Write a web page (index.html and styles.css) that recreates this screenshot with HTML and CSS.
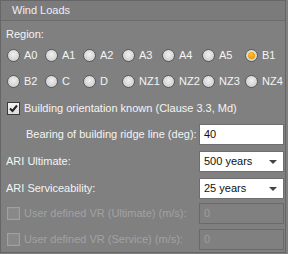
FILE: index.html
```html
<!DOCTYPE html>
<html>
<head>
<meta charset="utf-8">
<link rel="stylesheet" href="styles.css">
</head>
<body>
<div class="panel">
  <div class="header">Wind Loads</div>
  <div class="body">
    <div class="row-region">Region:</div>
    <div class="radios">
      <label class="radio"><span class="dot"></span>A0</label>
      <label class="radio"><span class="dot"></span>A1</label>
      <label class="radio"><span class="dot"></span>A2</label>
      <label class="radio"><span class="dot"></span>A3</label>
      <label class="radio"><span class="dot"></span>A4</label>
      <label class="radio"><span class="dot"></span>A5</label>
      <label class="radio"><span class="dot on"></span>B1</label>
      <label class="radio"><span class="dot"></span>B2</label>
      <label class="radio"><span class="dot"></span>C</label>
      <label class="radio"><span class="dot"></span>D</label>
      <label class="radio"><span class="dot"></span>NZ1</label>
      <label class="radio"><span class="dot"></span>NZ2</label>
      <label class="radio"><span class="dot"></span>NZ3</label>
      <label class="radio"><span class="dot"></span>NZ4</label>
    </div>
    <label class="check-row"><span class="cb"><svg width="9" height="9" viewBox="0 0 9 9"><path d="M1 4.5 L3.5 7 L8 1.5" fill="none" stroke="#222" stroke-width="2"/></svg></span>Building orientation known (Clause 3.3, Md)</label>
    <div class="field r-bearing"><span class="lbl indent">Bearing of building ridge line (deg):</span><div class="input">40</div></div>
    <div class="field r-ariu"><span class="lbl">ARI Ultimate:</span><div class="input select">500 years<span class="arrow"></span></div></div>
    <div class="field r-aris"><span class="lbl">ARI Serviceability:</span><div class="input select">25 years<span class="arrow"></span></div></div>
    <div class="field r-vru disabled"><span class="lbl"><span class="cb off"></span>User defined VR (Ultimate) (m/s):</span><div class="input dis">0</div></div>
    <div class="field r-vrs disabled"><span class="lbl"><span class="cb off"></span>User defined VR (Service) (m/s):</span><div class="input dis">0</div></div>
  </div>
</div>
</body>
</html>
```

FILE: styles.css
```css
html, body {
  margin: 0;
  padding: 0;
  background: #808080;
}
body {
  width: 288px;
  height: 254px;
  overflow: hidden;
  font-family: "Liberation Sans", Arial, sans-serif;
  font-size: 11px;
  color: #f4f4f4;
  white-space: nowrap;
}
.panel {
  box-sizing: border-box;
  width: 286px;
  height: 253px;
  border: 1px solid #666666;
  background: #808080;
}
.header {
  height: 19px;
  line-height: 19px;
  padding-left: 11px;
  background: #7b7b7b;
  border-bottom: 1px solid #6c6c6c;
  color: #eceef8;
}
.body {
  padding: 0 0 0 5px;
}
.row-region {
  height: 18px;
  line-height: 18px;
  margin-top: 4px;
}
.radios {
  display: grid;
  grid-template-columns: 38px 38px 39px 40px 40px 43px 1fr;
  grid-auto-rows: 24px;
  row-gap: 2px;
}
.radio {
  display: flex;
  align-items: center;
  gap: 4px;
  padding-left: 1px;
}
.dot {
  box-sizing: border-box;
  width: 13px;
  height: 13px;
  border-radius: 50%;
  border: 1px solid #5a5a5a;
  background: radial-gradient(circle at 50% 40%, #f0f0f0 0%, #d6d6d6 60%, #c4c4c4 100%);
  display: flex;
  align-items: center;
  justify-content: center;
}
.dot.on::after {
  content: "";
  width: 7px;
  height: 7px;
  border-radius: 50%;
  background: radial-gradient(circle at 45% 40%, #ffc040 0%, #f0a000 60%, #c87800 100%);
}
.check-row {
  display: flex;
  align-items: center;
  gap: 4px;
  height: 26px;
  margin-top: 2px;
  padding-left: 1px;
}
.cb {
  box-sizing: border-box;
  width: 13px;
  height: 13px;
  border: 1px solid #3a3a3a;
  background: linear-gradient(#f4f4f4, #dcdcdc);
  display: inline-flex;
  align-items: center;
  justify-content: center;
  flex: none;
}
.cb.off {
  border: 1px solid #a0a0a0;
  background: #888888;
  box-shadow: inset 0 0 0 1px #8c8c8c;
}
.field {
  display: flex;
  align-items: center;
  justify-content: space-between;
  padding-right: 1px;
}
.lbl {
  display: flex;
  align-items: center;
  gap: 4px;
}
.indent {
  padding-left: 20px;
}
.r-bearing { height: 26px; }
.r-ariu { height: 28px; }
.r-aris { height: 26px; }
.r-vru { height: 24px; }
.r-vrs { height: 28px; }
.disabled .lbl {
  color: #a2a2a2;
  padding-left: 1px;
}
.input {
  box-sizing: border-box;
  width: 85px;
  height: 21px;
  flex: none;
  border: 1px solid #6e6e6e;
  background: #ffffff;
  color: #111111;
  padding-left: 4px;
  display: flex;
  align-items: center;
  position: relative;
}
.select .arrow {
  position: absolute;
  right: 6px;
  top: 8px;
  width: 0;
  height: 0;
  border-left: 4px solid transparent;
  border-right: 4px solid transparent;
  border-top: 4px solid #444444;
}
.input.dis {
  background: #808080;
  border: 1px solid #6a6a6a;
  color: #9e9e9e;
}
```
